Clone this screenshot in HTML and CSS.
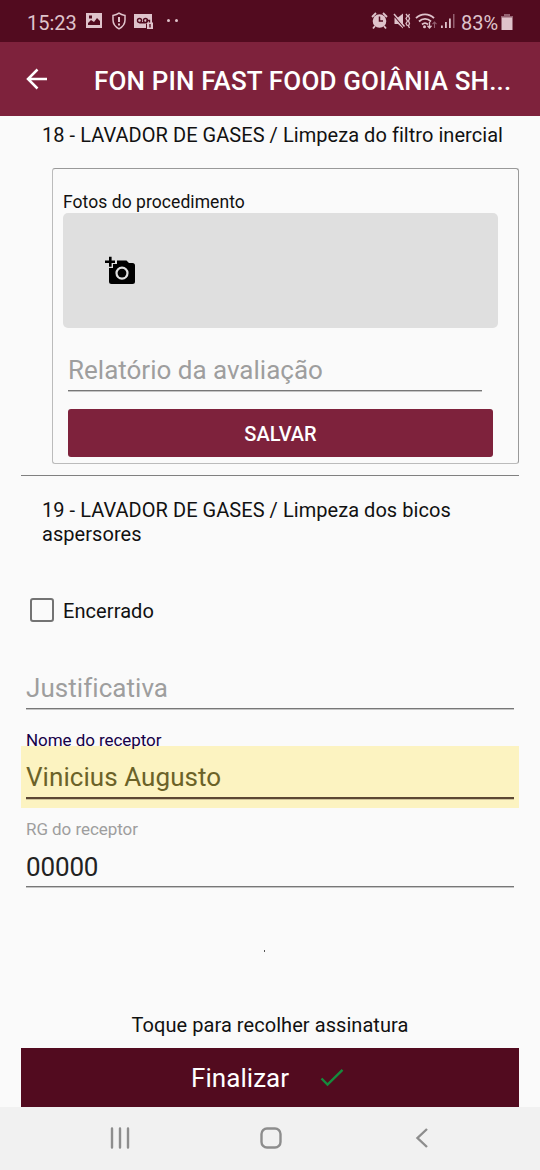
FILE: index.html
```html
<!DOCTYPE html>
<html lang="pt-BR">
<head>
<meta charset="utf-8">
<title>Checklist</title>
<link rel="stylesheet" href="styles.css">
</head>
<body>
<div class="screen">
  <div class="status">
    <span class="clock">15:23</span>
    <svg class="status-left" width="100" height="24" viewBox="0 0 100 24" fill="#dfc3cb">
      <path fill-rule="evenodd" d="M1 3h16v15H1zM3 15h12v-4l-3-3-3 4-3-2-3 3zM4 5.500h3v3H4z"/>
      <path d="M34 3.200c2 1.500 4 2 6 2.300V10c0 4.500-2.500 7-6 8.800-3.500-1.800-6-4.300-6-8.800V5.500c2-.3 4-.8 6-2.300z" fill="none" stroke="#dfc3cb" stroke-width="1.500"/>
      <path d="M33 7h2v5h-2zM33 13.500h2v2h-2z"/>
      <path d="M49 4h18v9.500h-6V18H49z"/>
      <g fill="none" stroke="#520b1f" stroke-width="1.400"><circle cx="54.500" cy="10.500" r="2"/><circle cx="60.500" cy="10.500" r="2"/><path d="M54.500 12.800h6M62 13v-2.500h2.500V13"/></g>
      <path d="M62 12.500h6V19h-6z"/><path d="M64.300 14h1.400v3.500h-1.400z" fill="#520b1f"/>
      <circle cx="83.500" cy="10.500" r="1.500"/><circle cx="91.500" cy="10.500" r="1.500"/>
    </svg>
    <svg class="status-right" width="86" height="24" viewBox="0 0 86 24" fill="#dfc3cb">
      <circle cx="9.500" cy="11" r="6.800"/><path d="M9.500 6.500V11H13" fill="none" stroke="#520b1f" stroke-width="1.500"/>
      <path d="M2 7l4-4M13 3l4 4M5 16l-2 2.500M14 16l2 2.500" stroke="#dfc3cb" stroke-width="1.800"/>
      <path d="M24.500 7.500h3.500l5-4v15l-5-4.500h-3.500z"/><path d="M24 5.500l10 12" stroke="#520b1f" stroke-width="1.200"/><path d="M24 4l10.500 12.500" stroke="#dfc3cb" stroke-width="1.500"/>
      <path d="M36 4l1.500 2-1.500 2.500 1.500 2.500-1.500 2.500 1.500 2.500M39.500 4l-1 2 1 2.500-1 2.500 1 2.500-1 2.500 1 2" fill="none" stroke="#dfc3cb" stroke-width="1.300"/>
      <g fill="none" stroke="#dfc3cb" stroke-width="1.800"><path d="M46 8.200c5-5.200 13-5.200 18 0M49 11.500c3.500-3.500 8.500-3.500 12 0M52 14.500c2-1.800 4-1.800 6 0"/></g>
      <circle cx="54.500" cy="16.800" r="1.500"/>
      <path d="M59.500 12v6m-2-2.200 2 2.200 2-2.200" fill="none" stroke="#dfc3cb" stroke-width="1.300"/><path d="M64.500 18v-6m-2 2.200 2-2.200 2 2.200" fill="none" stroke="#936070" stroke-width="1.100"/>
      <path d="M71 15.500h1.800V18H71zM75 12h1.800v6H75zM79 8.500h1.800V18H79z"/><path d="M83 4h1.500v14H83z" fill="#936070"/>
    </svg>
    <span class="battery-text">83%</span>
    <svg class="battery" width="12" height="18" viewBox="0 0 12 18"><path d="M3.500 1h5v2H11.500v14H.5V3h3z" fill="#dfc3cb"/><path d="M3.500 1h5v2H11.500v1.500H.5V3h3z" fill="#936070"/></svg>
  </div>
  <div class="appbar">
    <svg class="back" width="22" height="22" viewBox="0 0 22 22" fill="none" stroke="#fff" stroke-width="2.500"><path d="M21 11H2.500M11.500 1.500L2 11l9.500 9.500"/></svg>
    <span class="title">FON PIN FAST FOOD GOIÂNIA SH...</span>
  </div>
  <div class="content">
    <div class="item first">18 - LAVADOR DE GASES / Limpeza do filtro inercial</div>
    <div class="card">
      <div class="photos-label">Fotos do procedimento</div>
      <div class="photos">
        <svg width="32" height="30" viewBox="0 0 32 30">
          <path fill-rule="evenodd" d="M12 8V4.500h9.500L24 7h3.500A2.500 2.500 0 0 1 30 9.500v16A2.500 2.500 0 0 1 27.500 28h-21A2.500 2.500 0 0 1 4 25.500V12h4V8zM17 10.500a6.600 6.600 0 1 0 0 13.200 6.600 6.600 0 0 0 0-13.200z"/>
          <circle cx="17" cy="17.100" r="4.400"/>
          <path d="M4 .8h2.600v3.700H10v2.600H6.600v3.700H4V7.100H0V4.500h4z"/>
        </svg>
      </div>
      <div class="field report">Relatório da avaliação</div>
      <div class="save">SALVAR</div>
    </div>
    <div class="rule"></div>
    <div class="item second">19 - LAVADOR DE GASES / Limpeza dos bicos<br>aspersores</div>
    <div class="check"><span class="box"></span><span>Encerrado</span></div>
    <div class="field reason">Justificativa</div>
    <div class="label active">Nome do receptor</div>
    <div class="filled"><div class="field name">Vinicius Augusto</div></div>
    <div class="label">RG do receptor</div>
    <div class="field rg">00000</div>
    <div class="signature"><span class="mark"></span></div>
    <div class="hint">Toque para recolher assinatura</div>
    <div class="finish"><span>Finalizar</span>
      <svg width="24" height="20" viewBox="0 0 24 20" fill="none" stroke="#168b3d" stroke-width="2.400"><path d="M1.500 10.500l6 6L22.500 1.800"/></svg>
    </div>
  </div>
  <div class="nav">
    <svg width="540" height="63" viewBox="0 0 540 63" fill="none" stroke="#8d8d8d" stroke-width="2.400">
      <path d="M112 21.500v19M120 21.500v19M128 21.500v19" stroke-linecap="round"/>
      <rect x="261.500" y="21.500" width="19" height="19" rx="5.500"/>
      <path d="M427 22l-9.500 9 9.500 9"/>
    </svg>
  </div>
</div>
</body>
</html>
```
FILE: styles.css
```css
body { margin: 0; font-family: Roboto, "Liberation Sans", sans-serif; color: #111; background: #fafafa; }
svg { display: block; flex: none; }
.screen { width: 540px; height: 1170px; display: flex; flex-direction: column; overflow: hidden; white-space: nowrap; }
.status { height: 42px; background: #520b1f; color: #dfc3cb; display: flex; align-items: center; font-size: 20px; box-sizing: border-box; padding: 3px 26px 0 27px; }
.clock { width: 58px; }
.status-left { margin-top: -1px; }
.status-right { margin-left: 185px; margin-top: -2px; }
.battery-text { margin-left: 5px; width: 39px; }
.battery { margin-left: 1px; margin-top: -2px; }
.appbar { height: 74px; background: #7e223c; color: #fff; display: flex; align-items: center; }
.back { margin-left: 26px; }
.title { margin-left: 46px; font-size: 26px; letter-spacing: 0.160px; font-weight: 500; padding-top: 3px; }
.content { height: 991px; padding: 0 21px; display: flex; flex-direction: column; }
.item { font-size: 20px; line-height: 24px; letter-spacing: 0.050px; padding-left: 21px; }
.first { padding-top: 7px; height: 45px; }
.card { box-sizing: border-box; height: 296px; margin-left: 31px; border: 1px solid #999; border-left-color: #bbb; border-bottom-color: #bbb; border-radius: 3px; padding: 22px 20px 0 10px; }
.photos-label { font-size: 17.500px; letter-spacing: 0.060px; line-height: 22px; }
.photos { height: 115px; background: #dfdfdf; border-radius: 5px; display: flex; align-items: center; padding-left: 42px; }
.field { font-size: 26px; color: #9e9e9e; box-sizing: border-box; border-bottom: 1px solid #777; box-shadow: 0 1px 0 #c4c4c4; }
.report { margin: 24px 16px 0 5px; height: 39px; line-height: 37px; }
.save { margin: 18px 5px 0; height: 48px; line-height: 51px; border-radius: 3px; background: #7e223c; color: #fff; font-weight: 500; font-size: 20px; text-align: center; }
.rule { margin-top: 11px; height: 1px; background: #808080; flex: none; }
.second { margin-top: 23px; height: 48px; line-height: 23.500px; }
.check { margin: 49px 0 0 9px; height: 26px; display: flex; align-items: center; gap: 9px; font-size: 20px; letter-spacing: 0.080px; }
.check span + span { padding-top: 3px; }
.box { width: 20px; height: 20px; border: 2px solid #737373; border-radius: 3px; margin-top: 1px; }
.reason { margin: 45px 5px 0; height: 42px; line-height: 42px; letter-spacing: 0.050px; }
.label { font-size: 17px; letter-spacing: -0.060px; line-height: 22px; color: #9e9e9e; padding-left: 5px; }
.active { color: #160047; margin-top: 20px; height: 17px; position: relative; }
.filled { height: 62px; background: #fcf3c1; padding: 0 5px; }
.name { height: 53px; line-height: 63px; letter-spacing: 0.060px; color: #6b6228; border-bottom: 2px solid #5c4733; box-shadow: 0 1px 0 #cfc39a; }
.filled + .label { margin-top: 10px; }
.rg { margin: 6px 5px 0; height: 41px; line-height: 43px; letter-spacing: -0.150px; color: #222; }
.signature { height: 126px; display: flex; justify-content: center; box-sizing: border-box; padding: 63px 11px 0 0; }
.mark { width: 1px; height: 2px; background: #555; }
.hint { font-size: 20px; letter-spacing: 0.060px; line-height: 24px; text-align: center; }
.finish { margin-top: auto; height: 59px; background: #520b1f; color: #fff; font-size: 26px; letter-spacing: 0.050px; display: flex; align-items: center; gap: 31px; padding-left: 170px; }
.finish span { padding-top: 1px; }
.nav { height: 63px; background: #f1f1f1; }
```
